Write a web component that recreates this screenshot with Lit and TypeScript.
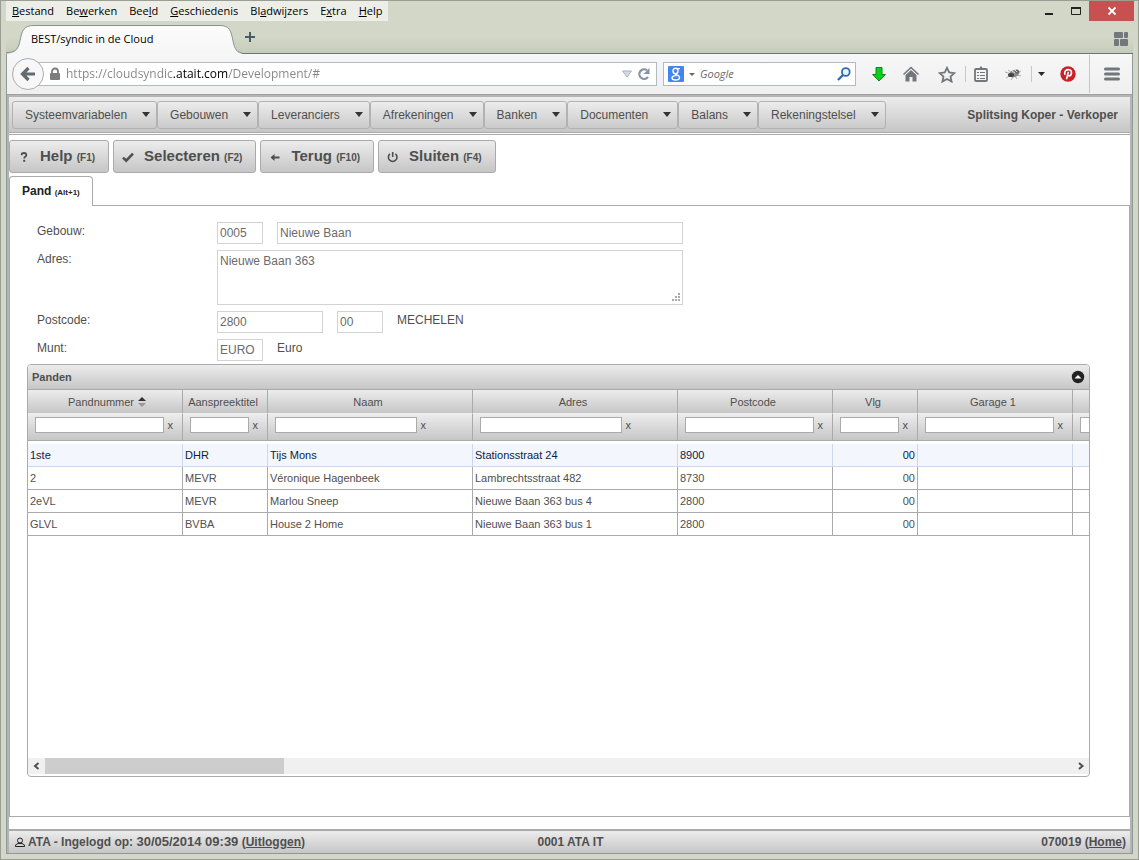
import { LitElement, html, css, svg, nothing } from "lit";
import { customElement, state } from "lit/decorators.js";

interface Column {
  label: string;
  width: number;
  align?: "right";
}

const BROWSER_MENU: [string, string, string][] = [
  ["", "B", "estand"],
  ["Be", "w", "erken"],
  ["Bee", "l", "d"],
  ["", "G", "eschiedenis"],
  ["Bl", "a", "dwijzers"],
  ["E", "x", "tra"],
  ["", "H", "elp"],
];

const APP_MENU = [
  "Systeemvariabelen",
  "Gebouwen",
  "Leveranciers",
  "Afrekeningen",
  "Banken",
  "Documenten",
  "Balans",
  "Rekeningstelsel",
];

const COLUMNS: Column[] = [
  { label: "Pandnummer", width: 155 },
  { label: "Aanspreektitel", width: 85 },
  { label: "Naam", width: 205 },
  { label: "Adres", width: 205 },
  { label: "Postcode", width: 155 },
  { label: "Vlg", width: 85, align: "right" },
  { label: "Garage 1", width: 155 },
  { label: "", width: 155 },
];

const ROWS = [
  ["1ste", "DHR", "Tijs Mons", "Stationsstraat 24", "8900", "00", "", ""],
  ["2", "MEVR", "Véronique Hagenbeek", "Lambrechtsstraat 482", "8730", "00", "", ""],
  ["2eVL", "MEVR", "Marlou Sneep", "Nieuwe Baan 363 bus 4", "2800", "00", "", ""],
  ["GLVL", "BVBA", "House 2 Home", "Nieuwe Baan 363 bus 1", "2800", "00", "", ""],
];

const ACTIONS = [
  {
    label: "Help",
    key: "(F1)",
    icon: svg`<path d="M5.7 6.2V5.4Q5.7 4 8 4T10.3 6Q10.3 7.2 9.2 7.8Q8.2 8.4 8.2 9.6" fill="none" stroke="currentColor" stroke-width="1.8"/><path d="M7.2 10.8h2v2h-2z"/>`,
  },
  {
    label: "Selecteren",
    key: "(F2)",
    icon: svg`<path d="M3 8.6 6.2 11.6 13 4.6" fill="none" stroke="currentColor" stroke-width="2.6"/>`,
  },
  {
    label: "Terug",
    key: "(F10)",
    icon: svg`<path d="M3.500 8.500 7.500 5v2.600h5v1.900h-5V12z"/>`,
  },
  {
    label: "Sluiten",
    key: "(F4)",
    icon: svg`<path d="M5 4.800A4.300 4.300 0 1 0 10.400 4.800M7.700 3v5" fill="none" stroke="currentColor" stroke-width="1.600"/>`,
  },
];

@customElement("browser-chrome")
export class BrowserChrome extends LitElement {
  static styles = css`
    :host {
      display: block;
      font: 11px/20px "Open Sans", "Noto Sans", sans-serif;
      color: #000;
    }
    button {
      font: inherit;
      color: inherit;
      background: none;
      border: 0;
      padding: 0;
      margin: 0;
      display: flex;
      align-items: center;
      justify-content: center;
    }
    svg {
      display: block;
      flex: none;
    }
    .titlebar {
      display: flex;
      justify-content: space-between;
      height: 20px;
      padding: 0 4px 0 5px;
    }
    .menu {
      display: flex;
      gap: 12px;
      padding: 0 6px;
      background: #edeee8;
    }
    .window-buttons {
      display: flex;
    }
    .window-buttons button {
      width: 27px;
    }
    .window-buttons .close {
      width: 45px;
      background: #c75050;
    }
    .tabs {
      display: flex;
      align-items: center;
      height: 32px;
      margin: 0 5px;
      border-bottom: 1px solid #66767b;
      background: linear-gradient(rgba(196, 203, 183, 0) 50%, #c6ccba);
    }
    .tab {
      position: relative;
      width: 234px;
      height: 28px;
      align-self: flex-end;
      display: flex;
      align-items: center;
    }
    .tab svg {
      position: absolute;
      left: 0;
      bottom: -1px;
    }
    .tab span {
      position: relative;
      padding-left: 25px;
    }
    .new-tab {
      width: 20px;
      height: 20px;
    }
    .groups {
      margin: 4px 5px 0 auto;
    }
    .toolbar {
      display: flex;
      align-items: center;
      height: 40px;
      margin: 0 5px;
      padding: 0 2px 0 5px;
      background: linear-gradient(#f7f7f7, #efefef);
      border: 1px solid #8f9a96;
      border-width: 0 1px;
    }
    .back {
      position: relative;
      z-index: 1;
      width: 32px;
      height: 32px;
      box-sizing: border-box;
      border: 1px solid #a8adb2;
      border-radius: 50%;
      background: #f7f7f7;
    }
    .address,
    .search {
      display: flex;
      align-items: center;
      height: 24px;
      box-sizing: border-box;
      background: #fff;
      border: 1px solid #b0bac4;
    }
    .address {
      flex: 1;
      margin-left: -6px;
      padding: 0 5px 0 10px;
      gap: 5px;
    }
    .search {
      width: 193px;
      margin: 0 8px 0 6px;
      padding: 0 4px;
      gap: 5px;
    }
    input {
      flex: 1;
      min-width: 0;
      height: 20px;
      padding: 0;
      border: 0;
      outline: 0;
      background: none;
      font: inherit;
      color: #6b6b6b;
    }
    .url {
      font-size: 12px;
      color: transparent;
      background: linear-gradient(90deg, #858585 107px, #000 107px 162px, #858585 162px);
      -webkit-background-clip: text;
      background-clip: text;
    }
    .search input {
      font-style: italic;
    }
    .tools {
      display: flex;
      align-items: center;
    }
    .tools button {
      width: 36px;
      height: 24px;
    }
    .tools .slim {
      width: 29px;
    }
    .tools .tiny {
      width: 18px;
    }
    .rule {
      width: 1px;
      height: 16px;
      background: #c3c8d0;
    }
    .rule.tall {
      height: 38px;
      margin: 0 4px 0 3px;
    }
  `;

  render() {
    return html`
      <div class="titlebar">
        <nav class="menu" aria-label="Menu">
          ${BROWSER_MENU.map(([a, k, b]) => html`<button>${a}<u>${k}</u>${b}</button>`)}
        </nav>
        <div class="window-buttons">
          <button aria-label="Minimaliseren">
            <svg width="10" height="10"><path d="M1 7h8v2H1z" fill="#222" /></svg>
          </button>
          <button aria-label="Maximaliseren">
            <svg width="12" height="10"><path d="M1.500 2v6.500h9V2z" fill="none" stroke="#222" /><path d="M1 1h10v2H1z" fill="#222" /></svg>
          </button>
          <button class="close" aria-label="Sluiten">
            <svg width="10" height="10"><path d="m1.500 1.500 7 7m0-7-7 7" stroke="#fff" stroke-width="1.800" /></svg>
          </button>
        </div>
      </div>
      <div class="tabs">
        <div class="tab">
          <svg width="236" height="30" viewBox="0 0 236 30">
            <defs>
              <linearGradient id="t" x2="0" y2="1"><stop stop-color="#fcfcfc" /><stop offset="1" stop-color="#f6f6f6" /></linearGradient>
            </defs>
            <path d="M0 29.500C9 29.500 12 27 14 17C16 6 18 1.500 28 1.500H214C223 1.500 225 6 227 17C229 27 232 29.500 236 29.500V30H0z" fill="url(#t)" />
            <path d="M0 28.500C9 28.500 12 26 14 17C16 6 18 1.500 28 1.500H214C223 1.500 225 6 227 17C229 26 231 28.500 236 28.500" fill="none" stroke="#8a958f" />
          </svg>
          <span>BEST/syndic in de Cloud</span>
        </div>
        <button class="new-tab" aria-label="Nieuw tabblad">
          <svg width="12" height="12"><path d="M1 6h10M6 1v10" stroke="#4b5b66" stroke-width="2" /></svg>
        </button>
        <button class="groups" aria-label="Tabgroepen">
          <svg width="14" height="14" fill="#73787b"><rect width="9" height="6" rx="1" /><rect x="10" width="4" height="6" rx="1" /><rect y="7" width="5" height="7" rx="1" /><rect x="6" y="7" width="8" height="7" rx="1" /></svg>
        </button>
      </div>
      <div class="toolbar">
        <button class="back" aria-label="Vorige">
          <svg width="16" height="16"><path d="M8.500 2 2.500 8l6 6M3 8h12" fill="none" stroke="#646a72" stroke-width="3.200" /></svg>
        </button>
        <div class="address">
          <svg width="12" height="14" fill="#7d7d7d"><path d="M3 7V4.500a3 3 0 0 1 6 0V7" fill="none" stroke="#7d7d7d" stroke-width="1.800" /><rect x="1" y="6" width="10" height="7" rx="1" /></svg>
          <input class="url" aria-label="Adres" value="https://cloudsyndic.atait.com/Development/#" />
          <svg width="10" height="8"><path d="M.5 1h9L5 7z" fill="#d5dae0" stroke="#aab3bd" /></svg>
          <svg width="14" height="14"><path d="M11 10A4.800 4.800 0 1 1 10 3.200" fill="none" stroke="#8894a0" stroke-width="2.200" /><path d="M12.500 1v6h-6z" fill="#8894a0" /></svg>
        </div>
        <div class="search">
          <svg width="16" height="16"><rect width="16" height="16" rx="1" fill="#4384f4" /><g fill="none" stroke="#fff" stroke-width="1.400"><ellipse cx="7.500" cy="5" rx="2.500" ry="2.700" /><path d="M9 2.600h3M7 8c2 1 4.500 1.500 4.500 3.400 0 2-2 2.600-4 2.600s-3.500-.8-3.500-2.300c0-2 3-2 4.500-2.200" /></g></svg>
          <svg width="6" height="3"><path d="M0 0h6L3 3z" fill="#666" /></svg>
          <input aria-label="Zoeken" value="Google" />
          <svg width="14" height="14"><circle cx="8.800" cy="5" r="3.900" fill="#e7f4fb" stroke="#2f6db0" stroke-width="1.800" /><path d="M6 8 1 13" stroke="#2f6db0" stroke-width="2.400" /></svg>
        </div>
        <div class="tools">
          <button class="slim" aria-label="Downloads">
            <svg width="16" height="16"><path d="M5 1.500h6v7h3.500L8 15 1.500 8.500H5z" fill="#0ccf18" stroke="#0a8a1a" /></svg>
          </button>
          <button aria-label="Startpagina">
            <svg width="18" height="16"><path d="m1.500 8.500 7.500-7 7.500 7" fill="none" stroke="#72777c" stroke-width="1.600" /><path d="M9 4 3.500 9v6.500h4V11h3v4.500h4V9z" fill="#72777c" /></svg>
          </button>
          <button aria-label="Bladwijzer">
            <svg width="18" height="17"><path d="m9 1.800 2.200 4.700 5.200.6-3.900 3.500 1.100 5L9 13l-4.600 2.600 1.100-5L1.600 7.100l5.200-.6z" fill="none" stroke="#72777c" stroke-width="1.800" /></svg>
          </button>
          <i class="rule"></i>
          <button class="slim" aria-label="Bladwijzerlijst">
            <svg width="14" height="16"><rect x="1" y="3" width="12" height="12" rx="1" fill="none" stroke="#72777c" stroke-width="1.800" /><path d="M4 4V2h1.500L7 0l1.500 2H10v2zM3 6h2v1H3zm3 0h5v1H6zM3 9h2v1H3zm3 0h5v1H6zm-3 3h2v1H3zm3 0h5v1H6z" fill="#72777c" /></svg>
          </button>
          <button aria-label="Firebug">
            <svg width="18" height="14"><path d="m1 5 6 2M2 11l5-3m0 5 3-4m3 3-2-3m6-5-4 2m4 3-4-1M4 3l4 3" stroke="#aaa" /><ellipse cx="10" cy="6.500" rx="5.500" ry="3.500" transform="rotate(-20 10 6)" fill="#8a8a8a" /><circle cx="13" cy="4.500" r="2" fill="#666" /><ellipse cx="7" cy="8" rx="3" ry="2" fill="#444" /><path d="m8 4 3 2m0-3 2 2" stroke="#ddd" /></svg>
          </button>
          <i class="rule"></i>
          <button class="tiny" aria-label="Meer">
            <svg width="7" height="4"><path d="M0 0h7L3.500 4z" fill="#222b33" /></svg>
          </button>
          <button aria-label="Pinterest">
            <svg width="16" height="16"><circle cx="8" cy="8" r="7.700" fill="#cb2027" /><path d="M5.300 8.800Q3.900 6.600 5.500 4.700 7 3.200 9.300 3.700 11.800 4.400 11.500 7 11 10 9 9.900 7.900 9.700 7.500 8.800M8.400 5.800 6.500 13.300" fill="none" stroke="#fff" stroke-width="1.600" /></svg>
          </button>
          <i class="rule tall"></i>
          <button aria-label="Menu openen">
            <svg width="16" height="14" stroke="#72777c" stroke-width="3" stroke-linecap="round"><path d="M1.500 2h13M1.500 7h13M1.500 12h13" /></svg>
          </button>
        </div>
      </div>
    `;
  }
}

@customElement("panden-grid")
export class PandenGrid extends LitElement {
  @state() private selected = 0;

  static styles = css`
    :host {
      display: flex;
      flex-direction: column;
      min-width: 0;
      box-sizing: border-box;
      border: 1px solid #aaa;
      border-radius: 4px;
      overflow: hidden;
      background: #fff;
      color: #4f4f4f;
      font: 11px/14px "Liberation Sans", Arial, sans-serif;
    }
    button {
      border: 0;
      padding: 0;
      background: none;
      font: inherit;
      color: inherit;
    }
    svg {
      display: block;
    }
    .title {
      display: flex;
      align-items: center;
      justify-content: space-between;
      height: 24px;
      padding: 0 4px;
      border-bottom: 1px solid #aaa;
      background: linear-gradient(#ececec, #c6c6c6);
      font-weight: bold;
    }
    .viewport {
      flex: 1;
      overflow: hidden;
    }
    table {
      table-layout: fixed;
      width: 1200px;
      border-spacing: 0;
    }
    th,
    td {
      box-sizing: border-box;
      border-right: 1px solid #aaa;
    }
    th {
      padding: 0;
      font-weight: normal;
      background: linear-gradient(#ececec, #c6c6c6);
    }
    .heads th {
      height: 24px;
      padding-right: 4px;
      border-bottom: 1px solid #eee;
    }
    .heads th.sorted {
      padding: 0 0 0 4px;
    }
    .heads button {
      display: inline-flex;
      align-items: center;
      gap: 4px;
    }
    .filters th {
      height: 27px;
      border-bottom: 1px solid #aaa;
    }
    .filter {
      display: flex;
      align-items: center;
      gap: 4px;
      padding: 0 9px 4px 7px;
    }
    .filter.wide {
      padding-right: 46px;
    }
    .filter input {
      flex: 1;
      min-width: 0;
      height: 16px;
      box-sizing: border-box;
      border: 1px solid #aaa;
      padding: 0 2px;
      background: #fff;
      font: inherit;
    }
    tbody::before {
      content: "";
      display: block;
      height: 3px;
    }
    td {
      height: 23px;
      padding: 0 2px;
      border-bottom: 1px solid #aaa;
      white-space: nowrap;
    }
    td.right {
      text-align: right;
    }
    .selected td {
      background: #f3f7fd;
      border-color: #ccd8f0;
      color: #0d1b4c;
    }
    .scroll {
      display: flex;
      height: 16px;
      margin-bottom: 2px;
      background: #f0f0f0;
    }
    .scroll button {
      display: flex;
      align-items: center;
      justify-content: center;
      width: 17px;
    }
    .track {
      flex: 1;
      display: flex;
    }
    .thumb {
      width: 23.3%;
      background: #cdcdcd;
    }
  `;

  render() {
    return html`
      <div class="title">
        <span>Panden</span>
        <button aria-label="Inklappen">
          <svg width="14" height="14"><circle cx="7" cy="7" r="6.200" fill="#222" /><path d="M3.500 8.500h7L7 5z" fill="#fff" /></svg>
        </button>
      </div>
      <div class="viewport">
        <table>
          <colgroup>
            ${COLUMNS.map((c) => html`<col style="width:${c.width}px" />`)}
          </colgroup>
          <thead>
            <tr class="heads">
              ${COLUMNS.map(
                (c, i) => html`<th scope="col" class=${i === 0 ? "sorted" : ""}>
                  <button>
                    ${c.label}
                    ${i === 0
                      ? html`<svg width="8" height="11"><path d="M0 5h8L4 1z" fill="#333" /><path d="M0 7h8l-4 4z" fill="#999" /></svg>`
                      : nothing}
                  </button>
                </th>`
              )}
            </tr>
            <tr class="filters">
              ${COLUMNS.map(
                (c) => html`<th>
                  <div class="filter ${c.width > 200 ? "wide" : ""}">
                    <input aria-label="Filter ${c.label}" />${c.label
                      ? html`<button aria-label="Filter wissen">x</button>`
                      : nothing}
                  </div>
                </th>`
              )}
            </tr>
          </thead>
          <tbody>
            ${ROWS.map(
              (row, i) => html`<tr class=${i === this.selected ? "selected" : ""} @click=${() => (this.selected = i)}>
                ${row.map((v, j) => html`<td class=${COLUMNS[j].align ?? ""}>${v}</td>`)}
              </tr>`
            )}
          </tbody>
        </table>
      </div>
      <div class="scroll">
        <button aria-label="Naar links"><svg width="8" height="8"><path d="M5.500 1 2 4l3.500 3" fill="none" stroke="#505050" stroke-width="2" /></svg></button>
        <div class="track"><div class="thumb"></div></div>
        <button aria-label="Naar rechts"><svg width="8" height="8"><path d="M2 1 5.500 4 2 7" fill="none" stroke="#505050" stroke-width="2" /></svg></button>
      </div>
    `;
  }
}

@customElement("app-root")
export class AppRoot extends LitElement {
  static styles = css`
    :host {
      display: flex;
      flex-direction: column;
      min-height: 100vh;
      box-sizing: border-box;
      border: 1px solid #9a9e92;
      background: #d3d7c8;
      color: #4f4f4f;
      font: 12px/18px "Liberation Sans", Arial, sans-serif;
    }
    button {
      font: inherit;
      color: inherit;
      margin: 0;
    }
    .app {
      flex: 1;
      display: flex;
      flex-direction: column;
      margin: 0 5px 5px;
      border: 1px solid #8f9a96;
      border-top-color: #a0a0a0;
      box-shadow: inset 0 0 0 2px #b4b4b4;
      padding: 2px 2px 0;
      background: #fff;
    }
    .menubar {
      display: flex;
      align-items: center;
      height: 36px;
      padding: 0 12px 0 3px;
      background: linear-gradient(#ececec, #c6c6c6);
      border-bottom: 1px solid #aaa;
      box-sizing: border-box;
      font-weight: bold;
    }
    .menubar button {
      display: flex;
      align-items: center;
      gap: 15px;
      height: 28px;
      padding: 0 6px 0 12px;
      border: 1px solid #b2b2b2;
      border-radius: 3px;
      background: linear-gradient(#ececec, #cacaca);
      font-weight: normal;
    }
    .menubar .context {
      margin-left: auto;
    }
    .actions {
      display: flex;
      gap: 4px;
      margin-top: 1px;
      padding: 5px 0 3px;
      border-top: 1px solid #aaa;
    }
    .actions button {
      display: flex;
      align-items: center;
      gap: 8px;
      height: 33px;
      padding: 0 13px 0 6px;
      border: 1px solid #aaa;
      border-radius: 3px;
      background: linear-gradient(#ececec, #c6c6c6);
      font-size: 15px;
      font-weight: bold;
    }
    .actions small {
      font-size: 10px;
    }
    .tabs {
      display: flex;
    }
    .tabs::after {
      content: "";
      flex: 1;
      border-bottom: 1px solid #aaa;
    }
    .tabs button {
      height: 30px;
      padding: 0 12px;
      border: 1px solid #aaa;
      border-bottom: 0;
      border-radius: 4px 4px 0 0;
      background: #fff;
      color: #222;
      font-weight: bold;
    }
    .tabs small {
      font-size: 8px;
    }
    .panel {
      flex: 1;
      display: flex;
      flex-direction: column;
      padding: 16px 39px 39px 17px;
      border: 1px solid #aaa;
      border-top: 0;
      margin-bottom: 12px;
    }
    .form {
      display: flex;
      flex-direction: column;
      gap: 6px;
      margin: 0 0 3px 10px;
    }
    .row {
      display: flex;
      align-items: flex-start;
      gap: 14px;
    }
    .row label {
      width: 166px;
    }
    .row input,
    .row textarea {
      box-sizing: border-box;
      height: 22px;
      margin: 0;
      padding: 1px 2px;
      border: 1px solid #d3d3d3;
      background: #fff;
      color: #6b6b6b;
      font: inherit;
    }
    .row .code {
      width: 46px;
    }
    .row .zip {
      width: 106px;
    }
    .row .name {
      width: 406px;
    }
    .row textarea {
      width: 466px;
      height: 55px;
    }
    .row textarea::-webkit-resizer {
      background: url('data:image/svg+xml,<svg xmlns="http://www.w3.org/2000/svg" width="15" height="15" fill="%23aaa"><path d="M11 4h2v2h-2zM8 7h2v2H8zm3 0h2v2h-2zM5 10h2v2H5zm3 0h2v2H8zm3 0h2v2h-2z"/></svg>')
        no-repeat right bottom;
    }
    panden-grid {
      flex: 1;
    }
    .footer {
      display: grid;
      grid-template-columns: 1fr auto 1fr;
      align-items: center;
      height: 24px;
      padding: 0 4px 0 6px;
      box-sizing: border-box;
      border-top: 2px solid #aaa;
      background: linear-gradient(#ececec, #c6c6c6);
      font-weight: bold;
    }
    .footer a {
      color: inherit;
    }
    .user {
      display: flex;
      align-items: center;
      gap: 3px;
    }
    .date {
      font-size: 13px;
    }
    .home {
      text-align: right;
    }
  `;

  render() {
    return html`
      <browser-chrome></browser-chrome>
      <div class="app">
        <header class="menubar">
          ${APP_MENU.map(
            (m) => html`<button>${m}<svg width="8" height="5"><path d="M0 0h8L4 5z" fill="#333" /></svg></button>`
          )}
          <span class="context">Splitsing Koper - Verkoper</span>
        </header>
        <div class="actions">
          ${ACTIONS.map(
            (a) => html`<button>
              <svg width="16" height="16" fill="currentColor">${a.icon}</svg><span>${a.label} <small>${a.key}</small></span>
            </button>`
          )}
        </div>
        <div class="tabs"><button>Pand <small>(Alt+1)</small></button></div>
        <main class="panel">
          <form class="form">
            <div class="row">
              <label for="gebouw">Gebouw:</label>
              <input id="gebouw" class="code" value="0005" />
              <input class="name" aria-label="Naam gebouw" value="Nieuwe Baan" />
            </div>
            <div class="row">
              <label for="adres">Adres:</label>
              <textarea id="adres" .value=${"Nieuwe Baan 363"}></textarea>
            </div>
            <div class="row">
              <label for="postcode">Postcode:</label>
              <input id="postcode" class="zip" value="2800" />
              <input class="code" aria-label="Volgnummer" value="00" />
              <span>MECHELEN</span>
            </div>
            <div class="row">
              <label for="munt">Munt:</label>
              <input id="munt" class="code" value="EURO" />
              <span>Euro</span>
            </div>
          </form>
          <panden-grid></panden-grid>
        </main>
        <footer class="footer">
          <div class="user">
            <svg width="10" height="10"><circle cx="5" cy="3.500" r="2.500" fill="none" stroke="#222" /><path d="M.5 9.500V8L3 6.500h4L9.500 8v1.500z" fill="none" stroke="#222" /></svg>
            <span>ATA - Ingelogd op: <span class="date">30/05/2014 09:39</span> (<a href="#">Uitloggen</a>)</span>
          </div>
          <div>0001 ATA IT</div>
          <div class="home">070019 (<a href="#">Home</a>)</div>
        </footer>
      </div>
    `;
  }
}
